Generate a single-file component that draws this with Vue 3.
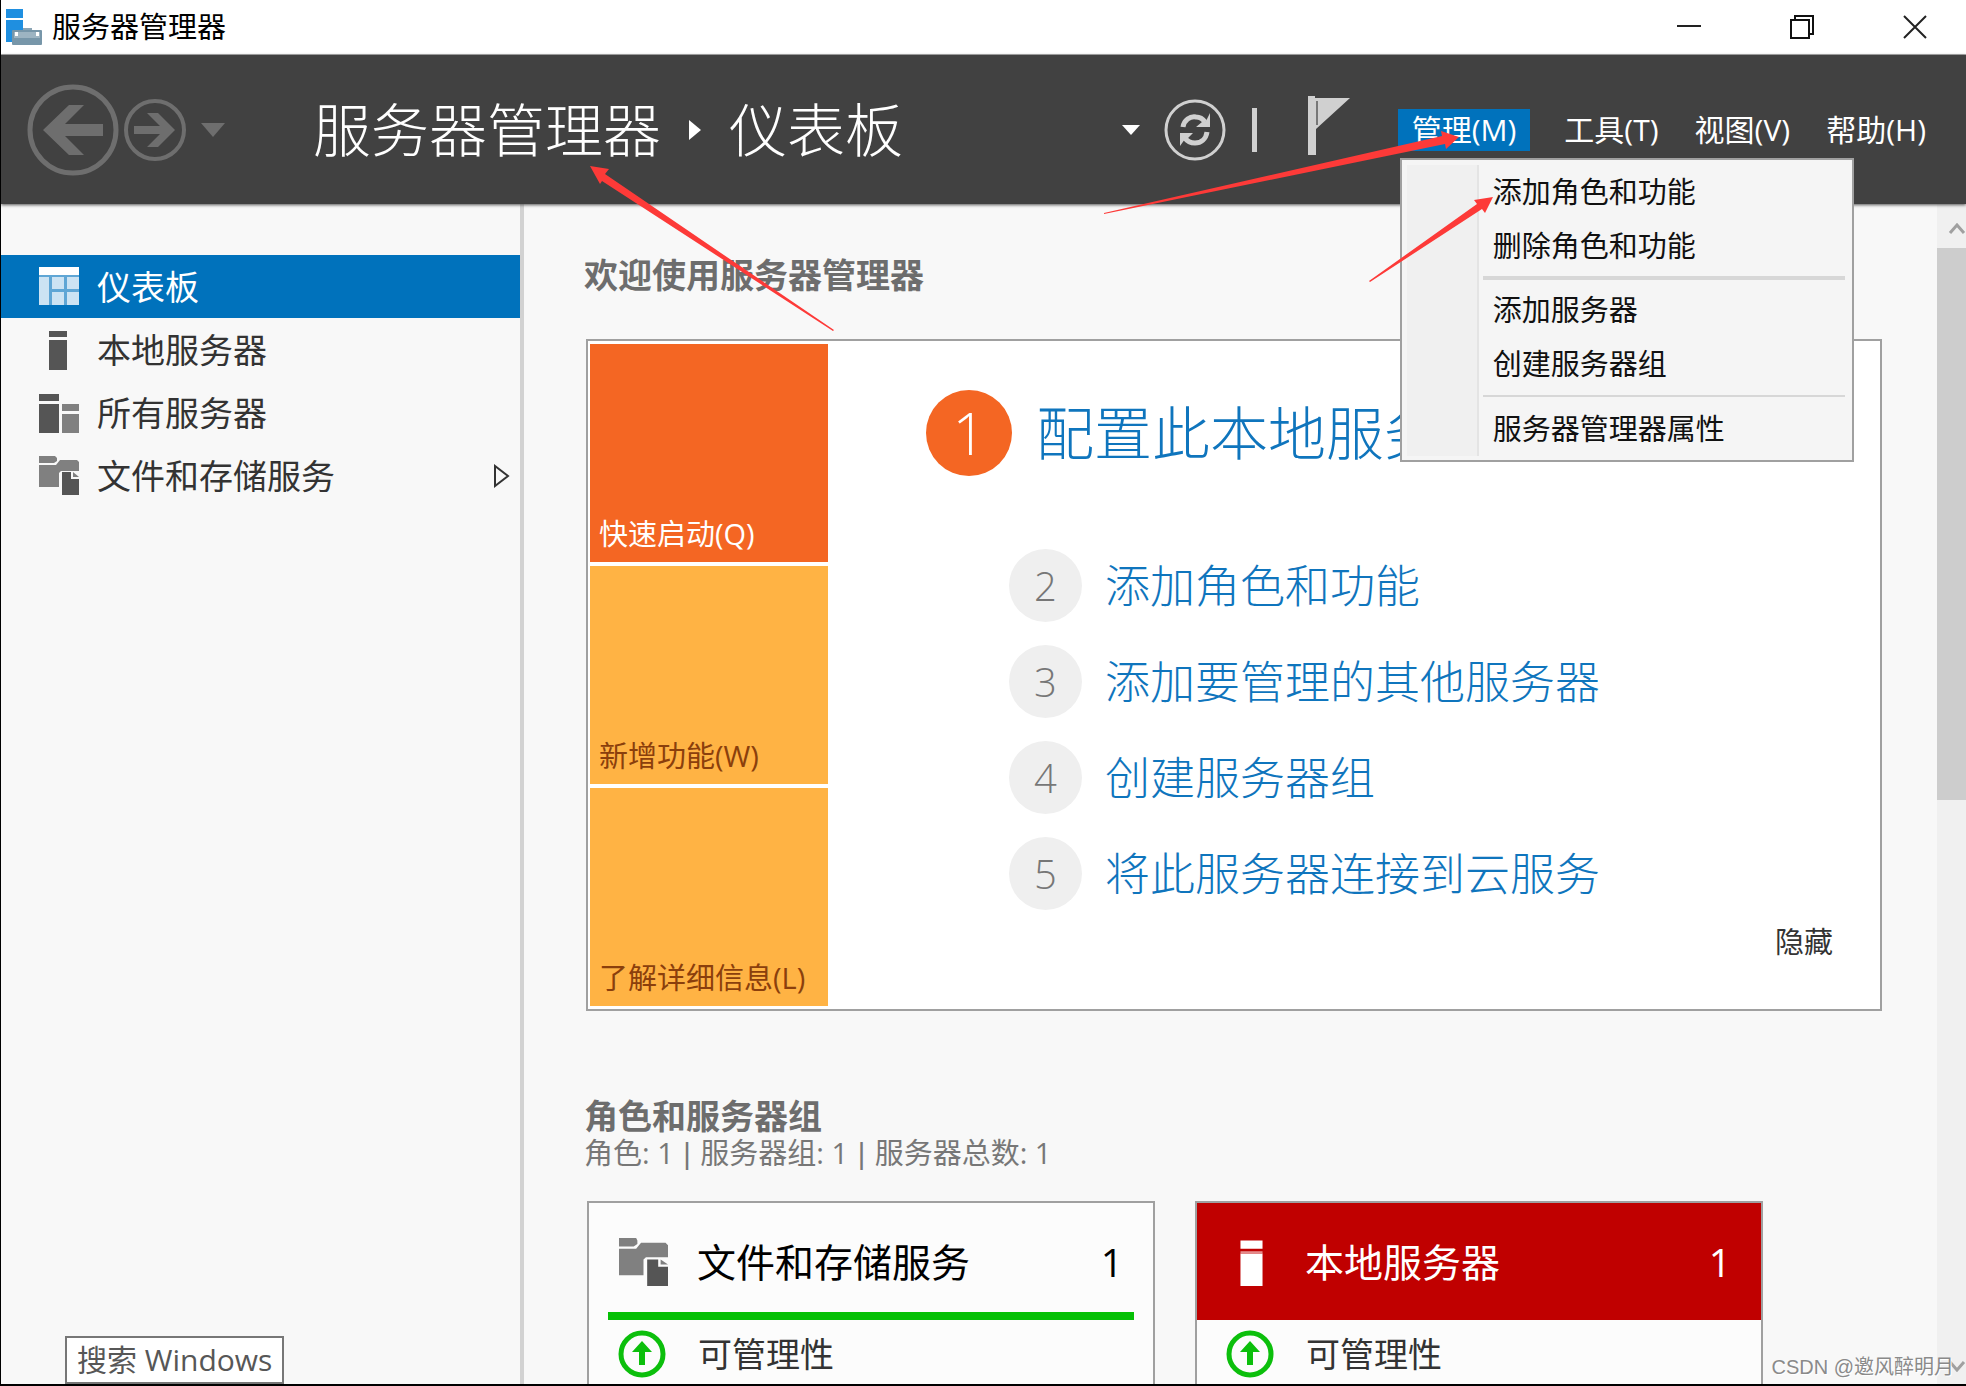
<script setup>
import { ref } from 'vue'

const menuOpen = ref(true)

const navItems = [
  { label: '仪表板', icon: 'dashboard', active: true },
  { label: '本地服务器', icon: 'server' },
  { label: '所有服务器', icon: 'servers' },
  { label: '文件和存储服务', icon: 'files', expandable: true },
]
const menus = ['工具(T)', '视图(V)', '帮助(H)']
const menuGroups = [
  ['添加角色和功能', '删除角色和功能'],
  ['添加服务器', '创建服务器组'],
  ['服务器管理器属性'],
]
const tiles = [
  { label: '快速启动(Q)', active: true },
  { label: '新增功能(W)' },
  { label: '了解详细信息(L)' },
]
const steps = ['配置此本地服务器', '添加角色和功能', '添加要管理的其他服务器', '创建服务器组', '将此服务器连接到云服务']
const cards = [
  { title: '文件和存储服务', icon: 'files', count: 1, status: '可管理性' },
  { title: '本地服务器', icon: 'server', count: 1, status: '可管理性', alert: true },
]
</script>

<template>
  <div class="window">
    <header class="titlebar">
      <svg class="app-icon" viewBox="0 0 38 38" aria-hidden="true">
        <path fill="#1f8fe0" d="M1 1h17v9H1zM1 12h17v10H12l-5 2v10H1z" />
        <path fill="#8ba5b5" d="M18 20h9v4h-9z" />
        <rect x="7" y="22" width="30" height="15" rx="1" fill="#7796a9" />
        <path fill="#9db4c2" d="M9 24h26v6H9z" />
        <path fill="#fff" d="M10 24h3v4h-3zM31 24h3v4h-3z" />
      </svg>
      <span class="titlebar-text">服务器管理器</span>
      <div class="window-controls">
        <button type="button" aria-label="最小化">
          <svg viewBox="0 0 24 24"><path d="M0 11h24" stroke="#222" stroke-width="2" /></svg>
        </button>
        <button type="button" aria-label="还原">
          <svg viewBox="0 0 24 24" fill="none" stroke="#111" stroke-width="2"><path d="M1 5h18v18H1zM5 5V1h18v18h-4" /></svg>
        </button>
        <button type="button" aria-label="关闭">
          <svg viewBox="0 0 24 24"><path d="M1 1l22 22M23 1L1 23" stroke="#222" stroke-width="2" /></svg>
        </button>
      </div>
    </header>

    <div class="toolbar">
      <div class="history">
        <button type="button" aria-label="后退">
          <svg width="92" height="94" viewBox="0 0 92 94">
            <circle cx="46" cy="47" r="43" fill="none" stroke="#6e6e6e" stroke-width="5" />
            <path fill="#6e6e6e" d="M16 47 42 22h15L38 41h38v12H38l19 19H42z" />
          </svg>
        </button>
        <button type="button" aria-label="前进">
          <svg width="64" height="64" viewBox="0 0 64 64">
            <circle cx="32" cy="32" r="29" fill="none" stroke="#6e6e6e" stroke-width="4" />
            <path fill="#6e6e6e" d="M52 32 35 15H24l13 13H11v8h26L24 49h11z" />
          </svg>
        </button>
        <button type="button" class="history-caret" aria-label="历史记录">
          <svg width="24" height="14" viewBox="0 0 24 14"><path fill="#6e6e6e" d="M0 0h24L12 14z" /></svg>
        </button>
      </div>
      <h1 class="crumbs">
        <span>服务器管理器</span>
        <svg width="12" height="20" viewBox="0 0 12 20"><path fill="#fff" d="M0 0l12 10L0 20z" /></svg>
        <span>仪表板</span>
      </h1>
      <div class="actions">
        <button type="button" aria-label="更多">
          <svg width="18" height="10" viewBox="0 0 18 10"><path fill="#fff" d="M0 0h18L9 10z" /></svg>
        </button>
        <button type="button" class="refresh" aria-label="刷新">
          <svg width="64" height="64" viewBox="0 0 64 64">
            <circle cx="32" cy="32" r="29" fill="none" stroke="#d0d0d0" stroke-width="3" />
            <path fill="none" stroke="#d0d0d0" stroke-width="5" d="M20 29c1-7 7-11 13-10 4 0 7 2 9 5M44 34c-1 7-6 11-12 11-4 0-8-2-10-5" />
            <path fill="#d0d0d0" d="M47 15v14H33l6-5 4-1zM17 48V35h13l-5 5-3 1z" />
          </svg>
        </button>
        <span class="divider"></span>
        <button type="button" class="flag" aria-label="通知">
          <svg width="42" height="60" viewBox="0 0 42 60">
            <path fill="#d0d0d0" d="M0 0h7v2h35L8 33v26H0z" />
            <path fill="none" stroke="#777" stroke-width="2" d="M9 5v24" />
          </svg>
        </button>
        <nav class="menubar">
          <div class="menu">
            <button type="button" class="menu-button open" :aria-expanded="menuOpen" @click="menuOpen = !menuOpen">管理(M)</button>
            <div v-if="menuOpen" class="dropdown" role="menu">
              <div class="dropdown-gutter"></div>
              <div class="dropdown-items">
                <div v-for="(group, g) in menuGroups" :key="g" class="dropdown-group">
                  <button v-for="item in group" :key="item" type="button" role="menuitem">{{ item }}</button>
                </div>
              </div>
            </div>
          </div>
          <button v-for="m in menus" :key="m" type="button" class="menu-button">{{ m }}</button>
        </nav>
      </div>
    </div>

    <div class="body">
      <aside class="sidebar">
        <a v-for="item in navItems" :key="item.label" href="#" class="nav-item" :class="{ active: item.active }">
          <svg class="nav-icon" viewBox="0 0 40 40" aria-hidden="true">
            <g v-if="item.icon === 'dashboard'">
              <path fill="#fff" d="M0 0h40v8H0z" />
              <path fill="#5fa6d5" d="M0 8h40v30H0z" />
              <path fill="#cce3f3" d="M0 10h10v28H0zM13 10h12v12H13zM28 10h12v12H28zM13 25h12v13H13zM28 25h12v13H28z" />
            </g>
            <path v-else-if="item.icon === 'server'" fill="#555" d="M10 1h18v6H10zM10 10h18v30H10z" />
            <g v-else-if="item.icon === 'servers'">
              <path fill="#555" d="M0 1h20v7H0zM0 11h20v29H0z" />
              <path fill="#808080" d="M23 11h17v7H23zM23 21h17v19H23z" />
            </g>
            <g v-else>
              <path fill="#808080" d="M0 0h16l2 2v3l-3 2H0zM0 9h17l4-5h17l2 2v9H22l-2 2v14H0z" />
              <path fill="#555" d="M23 16h9v7h8v16H23z" />
              <path fill="#808080" d="M34 16l6 5h-6z" />
            </g>
          </svg>
          <span>{{ item.label }}</span>
          <svg v-if="item.expandable" class="nav-caret" width="16" height="24" viewBox="0 0 16 24">
            <path fill="none" stroke="#333" stroke-width="2" d="M1 2v20l13-10z" />
          </svg>
        </a>
        <div class="tooltip" role="tooltip">搜索 Windows</div>
      </aside>

      <main class="content">
        <h2>欢迎使用服务器管理器</h2>
        <section class="welcome">
          <div class="tiles">
            <button v-for="t in tiles" :key="t.label" type="button" class="tile" :class="{ active: t.active }">{{ t.label }}</button>
          </div>
          <div class="steps">
            <ol>
              <li v-for="(s, i) in steps" :key="s" :class="{ primary: i === 0 }">
                <span class="num">{{ i + 1 }}</span>
                <a href="#">{{ s }}</a>
              </li>
            </ol>
            <button type="button" class="hide">隐藏</button>
          </div>
        </section>

        <h2 class="groups-title">角色和服务器组</h2>
        <p class="summary">角色: 1 <span class="bar">|</span> 服务器组: 1 <span class="bar">|</span> 服务器总数: 1</p>
        <section class="cards">
          <article v-for="c in cards" :key="c.title" class="card" :class="{ alert: c.alert }">
            <div class="card-head">
              <svg class="card-icon" viewBox="0 0 40 40" preserveAspectRatio="none" aria-hidden="true">
                <g v-if="c.icon === 'files'">
                  <path fill="#808080" d="M0 0h14l1 2v3l-3 2H0zM0 9h14l4-5h20l2 2v10H22l-2 2v13H0z" />
                  <path fill="#555" d="M23 18h9v6h8v16H23z" />
                  <path fill="#808080" d="M34 18l6 4h-6z" />
                </g>
                <g v-else fill="#fff">
                  <path d="M11 2h18v7H11zM11 13h18v27H11z" />
                  <path fill="#e58a8a" d="M11 11h18v2H11z" />
                </g>
              </svg>
              <h3>{{ c.title }}</h3>
              <span class="count">{{ c.count }}</span>
            </div>
            <div class="card-row">
              <svg width="48" height="48" viewBox="0 0 48 48" aria-hidden="true">
                <circle cx="24" cy="24" r="21" fill="none" stroke="#0cbf0c" stroke-width="5" />
                <path fill="#0cbf0c" d="M24 11l10 11h-7v13h-6V22h-7z" />
              </svg>
              <span>{{ c.status }}</span>
            </div>
          </article>
        </section>
      </main>

      <div class="scrollbar" aria-hidden="true">
        <svg width="18" height="12" viewBox="0 0 18 12"><path fill="none" stroke="#a0a0a0" stroke-width="3" d="M2 10l7-8 7 8" /></svg>
        <div class="thumb"></div>
        <svg class="down" width="18" height="12" viewBox="0 0 18 12"><path fill="none" stroke="#a0a0a0" stroke-width="3" d="M2 2l7 8 7-8" /></svg>
      </div>
    </div>

    <svg class="annotations" width="1966" height="400" viewBox="0 0 1966 400" aria-hidden="true">
      <g fill="#fd3a38">
        <path d="M590 166l19 3-4 5 229 156-1 1-231-150-2 3z" />
        <path d="M1459 137l-18-6 1 5-338 77v1l341-70 1 5z" />
        <path d="M1493 197l-19 3 3 4-108 77 1 1 112-73 3 4z" />
      </g>
    </svg>
    <span class="watermark">CSDN @邀风醉明月</span>
  </div>
</template>

<style>
body {
  margin: 0;
  overflow: hidden;
}
</style>

<style scoped>
.window {
  position: relative;
  box-sizing: border-box;
  height: 100vh;
  display: flex;
  flex-direction: column;
  border-left: 1px solid #000;
  border-bottom: 2px solid #000;
  background: #f8f8f8;
  color: #333;
  font-family: "Open Sans", "Noto Sans CJK SC", sans-serif;
  font-size: 29px;
  line-height: 40px;
  overflow: hidden;
}
button {
  display: block;
  margin: 0;
  padding: 0;
  border: 0;
  background: none;
  color: inherit;
  font: inherit;
  text-align: left;
  white-space: nowrap;
}
svg {
  display: block;
  flex: none;
}
a {
  color: inherit;
  text-decoration: none;
}
h1,
h2,
h3,
p,
ol {
  margin: 0;
  padding: 0;
  list-style: none;
}

.titlebar {
  flex: none;
  display: flex;
  align-items: center;
  height: 54px;
  padding-left: 4px;
  background: #fff;
  border-bottom: 1px solid #aaa;
  color: #000;
}
.app-icon {
  width: 38px;
  height: 38px;
  margin-right: 9px;
}
.window-controls {
  display: flex;
  gap: 89px;
  margin-left: auto;
  padding-right: 39px;
}
.window-controls svg {
  width: 24px;
  height: 24px;
}

.toolbar {
  position: relative;
  z-index: 2;
  flex: none;
  display: flex;
  align-items: center;
  height: 149px;
  background: #414141;
  box-shadow: 0 1px 3px #555;
  color: #fff;
}
.history {
  display: flex;
  align-items: center;
  gap: 4px;
  padding-left: 26px;
}
.history-caret {
  margin-left: 10px;
}
.crumbs {
  display: flex;
  align-items: center;
  gap: 28px;
  margin-left: 88px;
  font-size: 58px;
  font-weight: 300;
  line-height: 80px;
  white-space: nowrap;
}
.actions {
  display: flex;
  align-items: center;
  margin-left: auto;
  padding-right: 26px;
}
.refresh {
  margin-left: 23px;
}
.divider {
  width: 5px;
  height: 44px;
  margin-left: 25px;
  background: #d0d0d0;
}
.flag {
  margin: 0 48px 8px 51px;
}
.menubar {
  display: flex;
  gap: 8px;
}
.menu {
  position: relative;
  margin-right: 12px;
}
.menu-button {
  padding: 0 14px;
  font-size: 30px;
  line-height: 42px;
}
.menu-button.open {
  background: #0072bc;
}
.dropdown {
  position: absolute;
  top: 49px;
  left: 2px;
  box-sizing: border-box;
  display: flex;
  width: 454px;
  padding: 5px 7px 4px 5px;
  border: 2px solid #a0a0a0;
  background: #f5f5f5;
  color: #111;
}
.dropdown-gutter {
  width: 70px;
  background: #f0f0f0;
  border-right: 2px solid #e4e4e4;
}
.dropdown-items {
  flex: 1;
  padding-left: 4px;
}
.dropdown-group + .dropdown-group {
  border-top: 2px solid #d7d7d7;
  margin-top: 4px;
  padding-top: 5px;
}
.dropdown-group:nth-child(2) {
  border-top-width: 4px;
  margin-top: 3px;
  padding-top: 3px;
}
.dropdown-group button {
  width: 100%;
  padding-left: 10px;
  line-height: 54px;
}

.body {
  flex: 1;
  display: flex;
  min-height: 0;
}
.sidebar {
  position: relative;
  flex: none;
  box-sizing: border-box;
  width: 523px;
  padding-top: 51px;
  border-right: 4px solid #d2d2d2;
}
.nav-item {
  display: flex;
  align-items: center;
  height: 63px;
  padding: 0 10px 0 38px;
  font-size: 34px;
}
.nav-item.active {
  background: #0072bc;
  color: #fff;
}
.nav-icon {
  width: 40px;
  height: 40px;
  margin-right: 18px;
}
.nav-caret {
  margin-left: auto;
}
.tooltip {
  position: absolute;
  left: 64px;
  bottom: 0;
  padding: 2px 10px;
  border: 2px solid #777;
  background: #fff;
  color: #575757;
  font-size: 30px;
}

.content {
  flex: 1;
  min-width: 0;
  padding: 47px 55px 0 60px;
  overflow: hidden;
}
h2 {
  color: #6d6d6d;
  font-size: 34px;
  font-weight: 700;
  line-height: 48px;
}
.welcome {
  display: flex;
  margin: 40px 0 0 2px;
  padding: 3px 2px;
  border: 2px solid #a0a0a0;
  background: #fff;
}
.tiles {
  flex: none;
  display: flex;
  flex-direction: column;
  gap: 4px;
  width: 238px;
}
.tile {
  display: flex;
  align-items: flex-end;
  height: 218px;
  padding: 0 9px 8px;
  background: #ffb344;
  color: #8b3f0c;
}
.tile.active {
  background: #f46623;
  color: #fff;
}
.steps {
  flex: 1;
  display: flex;
  flex-direction: column;
  padding: 46px 45px 0 98px;
}
li {
  display: flex;
  align-items: center;
  gap: 23px;
  height: 73px;
  margin: 0 0 23px 83px;
  color: #0f75bd;
  font-size: 45px;
  font-weight: 300;
  line-height: 60px;
  white-space: nowrap;
}
.num {
  width: 73px;
  border-radius: 50%;
  background: #efefef;
  color: #777;
  font-size: 40px;
  line-height: 73px;
  text-align: center;
}
li.primary {
  gap: 24px;
  height: 86px;
  margin: 0 0 73px;
  font-size: 58px;
  line-height: 80px;
}
.primary .num {
  width: 86px;
  background: #f46623;
  color: #fff;
  font-size: 58px;
  line-height: 86px;
}
.hide {
  align-self: flex-end;
  margin-top: -11px;
}
.groups-title {
  margin-top: 86px;
  line-height: 38px;
}
.summary {
  color: #777;
  line-height: 36px;
}
.bar {
  margin: 0 2px;
  font-family: "Liberation Sans", sans-serif;
}
.cards {
  display: flex;
  gap: 40px;
  margin: 29px 0 0 3px;
}
.card {
  box-sizing: border-box;
  width: 568px;
  height: 400px;
  border: 2px solid #a0a0a0;
  background: #fcfcfc;
}
.card-head {
  display: flex;
  align-items: center;
  height: 109px;
  margin: 0 19px;
  padding: 0 11px;
  border-bottom: 8px solid #05c005;
  color: #000;
}
.card-icon {
  width: 49px;
  height: 48px;
  margin: 9px 29px 0 0;
}
h3 {
  margin-top: 9px;
  font-size: 39px;
  font-weight: 400;
  line-height: 54px;
}
.count {
  margin: 9px 0 0 auto;
  font-size: 39px;
}
.card.alert .card-head {
  margin: 0;
  padding: 0 30px;
  border-color: #c00000;
  background: #c00000;
  color: #fff;
}
.card-row {
  display: flex;
  align-items: center;
  gap: 32px;
  height: 68px;
  padding-left: 29px;
  font-size: 34px;
}

.scrollbar {
  flex: none;
  display: flex;
  flex-direction: column;
  align-items: flex-end;
  width: 29px;
  padding: 19px 0 12px;
  background: #f0f0f0;
}
.thumb {
  width: 100%;
  height: 48%;
  margin-top: 13px;
  background: #cdcdcd;
}
.down {
  margin-top: auto;
}

.annotations {
  position: absolute;
  z-index: 3;
  top: 0;
  left: -1px;
  pointer-events: none;
}
.watermark {
  position: absolute;
  right: 12px;
  bottom: 3px;
  color: #8a8a8a;
  font-family: "Liberation Sans", "Noto Sans CJK SC", sans-serif;
  font-size: 20px;
  line-height: 28px;
  text-shadow: 1px 1px 0 #fff;
}
</style>
